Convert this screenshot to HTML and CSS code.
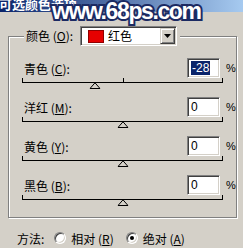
FILE: index.html
```html
<!DOCTYPE html>
<html>
<head>
<meta charset="utf-8">
<link rel="stylesheet" href="styles.css">
</head>
<body>
<div class="window">
  <div class="titlebar"><span class="title">可选颜色选项</span></div>
  <div class="watermark">www.68ps.com</div>
  <fieldset class="group">
    <legend class="legend">
      <span class="legend-label">颜色 (<u>O</u>):</span>
      <span class="combo">
        <span class="swatch"></span>
        <span class="combo-text">红色</span>
        <span class="combo-btn"><svg width="7" height="4" viewBox="0 0 7 4"><polygon points="0,0 7,0 3.5,4" fill="#000"/></svg></span>
      </span>
    </legend>

    <div class="channel">
      <div class="channel-head">
        <span class="label">青色 (<u>C</u>):</span>
        <span class="field"><span class="sel">-28</span></span>
        <span class="pct">%</span>
      </div>
      <div class="slider">
        <span class="tick-mid"></span>
        <span class="thumb" style="left: 36.2%"><svg width="11" height="7" viewBox="0 0 11 7"><polygon points="5.5,0.8 0.5,6.5 10.5,6.5" fill="none" stroke="#000" stroke-width="1"/></svg></span>
      </div>
    </div>

    <div class="channel">
      <div class="channel-head">
        <span class="label">洋红 (<u>M</u>):</span>
        <span class="field">0</span>
        <span class="pct">%</span>
      </div>
      <div class="slider">
        <span class="thumb" style="left: 50%"><svg width="11" height="7" viewBox="0 0 11 7"><polygon points="5.5,0.8 0.5,6.5 10.5,6.5" fill="none" stroke="#000" stroke-width="1"/></svg></span>
      </div>
    </div>

    <div class="channel">
      <div class="channel-head">
        <span class="label">黄色 (<u>Y</u>):</span>
        <span class="field">0</span>
        <span class="pct">%</span>
      </div>
      <div class="slider">
        <span class="thumb" style="left: 50%"><svg width="11" height="7" viewBox="0 0 11 7"><polygon points="5.5,0.8 0.5,6.5 10.5,6.5" fill="none" stroke="#000" stroke-width="1"/></svg></span>
      </div>
    </div>

    <div class="channel">
      <div class="channel-head">
        <span class="label">黑色 (<u>B</u>):</span>
        <span class="field">0</span>
        <span class="pct">%</span>
      </div>
      <div class="slider">
        <span class="thumb" style="left: 50%"><svg width="11" height="7" viewBox="0 0 11 7"><polygon points="5.5,0.8 0.5,6.5 10.5,6.5" fill="none" stroke="#000" stroke-width="1"/></svg></span>
      </div>
    </div>
  </fieldset>

  <div class="method">
    <span class="method-label">方法:</span>
    <span class="radio"></span>
    <span class="radio-label">相对 (<u>R</u>)</span>
    <span class="radio checked"></span>
    <span class="radio-label">绝对 (<u>A</u>)</span>
  </div>
</div>
</body>
</html>
```

FILE: styles.css
```css
* { box-sizing: border-box; }
html, body { margin: 0; padding: 0; }
body {
  width: 243px;
  height: 248px;
  overflow: hidden;
  background: #D4D0C8;
  font-family: "Noto Sans CJK SC", "Liberation Sans", sans-serif;
  font-size: 12px;
  color: #000;
}
.window { position: relative; width: 243px; height: 248px; }

.titlebar {
  height: 12px;
  background: linear-gradient(to right, #0A246A, #A6CAF0);
  overflow: hidden;
}
.title {
  display: block;
  margin: -4px 0 0 -1px;
  color: #fff;
  font-weight: bold;
  font-size: 13px;
  line-height: 16px;
  white-space: nowrap;
}
.watermark {
  position: absolute;
  left: 52px;
  top: 0;
  font: bold 23px/23px "Liberation Sans", sans-serif;
  letter-spacing: -1.4px;
  color: #fff;
  -webkit-text-stroke: 4px #1b2a62;
  paint-order: stroke fill;
  white-space: nowrap;
}

.group {
  margin: 14px 0 0 8px;
  width: 229px;
  padding: 12px 13px 17px 13px;
  border: 1px solid #808080;
  box-shadow: inset 1px 1px 0 #fff, 1px 1px 0 #fff;
  min-width: 0;
}
.legend {
  display: flex;
  align-items: center;
  height: 20px;
  margin-left: 2px;
  padding: 0 3px 0 2px;
  background: #D4D0C8;
}
.legend-label { width: 54px; white-space: nowrap; line-height: 20px; }
.combo {
  width: 97px;
  height: 20px;
  display: flex;
  align-items: center;
  background: #fff;
  border: 1px solid;
  border-color: #808080 #fff #fff #808080;
  box-shadow: inset 1px 1px 0 #404040, inset -1px -1px 0 #D4D0C8;
  padding: 0 1px 0 7px;
}
.swatch {
  width: 16px;
  height: 13px;
  background: #e60000;
  border: 1px solid #900000;
}
.combo-text { margin-left: 4px; flex: 1; line-height: 16px; }
.combo-btn {
  width: 15px;
  height: 16px;
  background: #D4D0C8;
  border: 1px solid;
  border-color: #D4D0C8 #404040 #404040 #D4D0C8;
  box-shadow: inset 1px 1px 0 #fff, inset -1px -1px 0 #808080;
  display: flex;
  align-items: center;
  justify-content: center;
}
.combo-btn svg { display: block; }

.channel + .channel { margin-top: 14px; }
.channel-head {
  display: flex;
  align-items: center;
  height: 20px;
  margin-right: -12px;
}
.label { flex: 1; padding-left: 2px; white-space: nowrap; }
.field {
  width: 33px;
  height: 20px;
  display: flex;
  align-items: center;
  padding: 0 3px;
  background: #fff;
  border: 1px solid;
  border-color: #808080 #fff #fff #808080;
  box-shadow: inset 1px 1px 0 #404040, inset -1px -1px 0 #D4D0C8;
  font-family: "Liberation Sans", sans-serif;
  font-size: 12px;
}
.sel {
  background: #0A246A;
  color: #fff;
  padding: 0 1px;
  line-height: 14px;
}
.pct { width: 9px; margin-left: 6px; font-family: "Liberation Sans", sans-serif; font-size: 11px; }

.slider {
  position: relative;
  height: 5px;
  border: 1px solid #000;
  border-top: 0;
}
.tick-mid {
  position: absolute;
  left: 50%;
  top: 0;
  width: 1px;
  height: 4px;
  background: #000;
}
.thumb {
  position: absolute;
  top: 4px;
  width: 11px;
  height: 7px;
  transform: translateX(-50%);
}
.thumb svg { display: block; }

.method {
  display: flex;
  align-items: center;
  height: 16px;
  margin: 12px 0 0 17px;
}
.method-label { margin-right: 10px; }
.radio {
  width: 12px;
  height: 12px;
  border-radius: 50%;
  border: 1px solid;
  border-color: #808080 #fff #fff #808080;
  box-shadow: inset 1px 1px 0 #404040, inset -1px -1px 0 #D4D0C8;
  background: #fff;
  position: relative;
}
.radio.checked::after {
  content: "";
  position: absolute;
  left: 3px;
  top: 3px;
  width: 4px;
  height: 4px;
  border-radius: 50%;
  background: #000;
}
.radio-label { margin-left: 5px; margin-right: 12px; }
```
